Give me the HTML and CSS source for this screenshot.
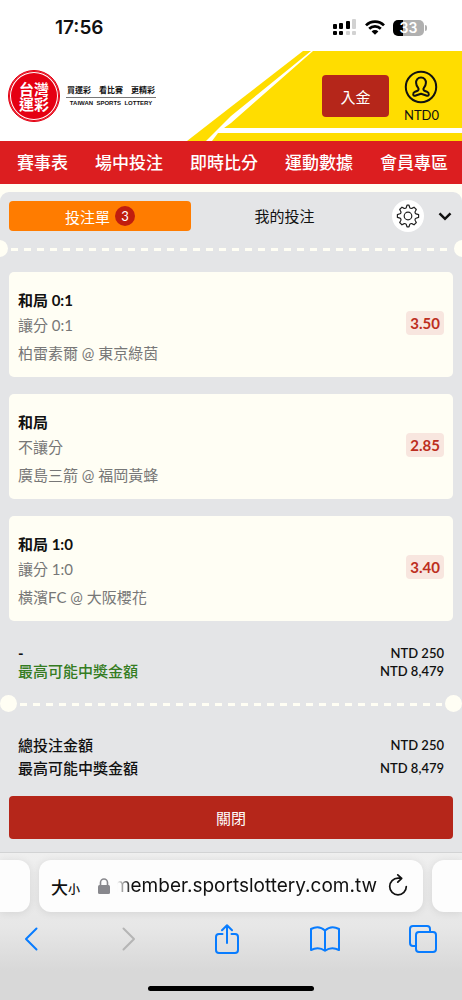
FILE: index.html
```html
<!DOCTYPE html>
<html lang="zh-Hant">
<head>
<meta charset="utf-8">
<meta name="viewport" content="width=device-width, initial-scale=1">
<title>台灣運彩</title>
<link rel="stylesheet" href="styles.css">
</head>
<body>
<div class="status">
  <time class="clock">17:56</time>
  <div class="status-icons">
    <svg width="24" height="17" viewBox="0 0 24 17" aria-hidden="true">
      <g fill="#000"><rect x="0" y="5" width="4" height="5" rx="1"/><rect x="6" y="4" width="4" height="6" rx="1"/><rect x="13" y="2" width="4" height="8" rx="1"/><rect x="0" y="12" width="4" height="4" rx="1"/><rect x="6" y="12" width="4" height="4" rx="1"/></g>
      <g fill="#d2d2d2"><rect x="19" y="0" width="4" height="10" rx="1"/><rect x="13" y="12" width="4" height="4" rx="1"/><rect x="19" y="12" width="4" height="4" rx="1"/></g>
    </svg>
    <svg width="20" height="15" viewBox="0 0 20 15" aria-hidden="true">
      <g fill="none" stroke="#000" stroke-width="2.7"><path d="M1 5.4a12.7 12.7 0 0 1 18 0"/><path d="M4.2 8.800a8.200 8.200 0 0 1 11.600 0"/></g>
      <path d="M10 14.800 6.600 11.400a4.800 4.800 0 0 1 6.800 0z"/>
    </svg>
    <span class="battery">33</span>
  </div>
</div>

<header class="header">
  <svg class="header-art" viewBox="0 0 276 90" preserveAspectRatio="xMaxYMid slice" aria-hidden="true">
    <path fill="#ffdd00" d="M117 0H276V90H1L46 55Z"/>
    <path fill="#fff" d="M125 0H127L45 72 38 77H276V82H32L26 90H20L45 65Z"/>
  </svg>
  <a class="logo" href="#">
    <span class="seal"><span>台灣<br>運彩</span></span>
    <span class="slogan">
      <span class="slogan-zh"><span>買運彩</span><span>看比賽</span><span>更精彩</span></span>
      <span class="slogan-en">TAIWAN&nbsp; SPORTS&nbsp; LOTTERY</span>
    </span>
  </a>
  <div class="account">
    <button class="deposit" type="button">入金</button>
    <a class="profile" href="#">
      <svg width="34" height="34" viewBox="0 0 34 34" fill="none" stroke="#111" stroke-width="2" aria-hidden="true">
        <circle cx="17" cy="17" r="15.200"/>
        <path stroke-linejoin="round" d="M17 7.500c-3.200 0-5.100 2.300-4.900 5.400.1 2.500 1 3.900 2.100 5.100.7.900.4 2.300-.6 2.700l-2.500 1c-1.300.6-2 1.600-1.900 2.900.2 1.300 1.400 1.300 2.600.9l5.200-1.800 5.200 1.800c1.200.4 2.400.4 2.600-.9.1-1.300-.6-2.300-1.900-2.900l-2.500-1c-1-.4-1.300-1.800-.6-2.700 1.100-1.200 2-2.600 2.100-5.100.2-3.100-1.700-5.400-4.900-5.400Z"/>
      </svg>
      <span>NTD0</span>
    </a>
  </div>
</header>

<nav class="nav">
  <a href="#">賽事表</a><a href="#">場中投注</a><a href="#">即時比分</a><a href="#">運動數據</a><a href="#">會員專區</a>
</nav>

<main class="page">
  <section class="slip">
    <div class="tabs">
      <button class="tab tab-active" type="button">投注單<span class="count">3</span></button>
      <button class="tab" type="button">我的投注</button>
      <button class="gear" type="button" aria-label="設定">
        <svg width="24" height="24" viewBox="0 0 24 24" fill="none" stroke="#222" stroke-width="1.200" stroke-linejoin="round" aria-hidden="true">
          <circle cx="12" cy="12" r="3.800"/>
          <path d="M10.300 3.500 11 1.200h2l.7 2.300c.2.600 1.500 1.200 2.100.9l2.200-1.200 2.300 2.300-1.200 2.200c-.3.700.2 1.900.9 2.100l2.600.8v2.800l-2.600.8c-.7.200-1.200 1.400-.9 2.100l1.200 2.200-2.300 2.300-2.200-1.200c-.6-.3-1.900.3-2.100.9l-.7 2.300h-2l-.7-2.300c-.2-.6-1.500-1.200-2.100-.9L6 20.800l-2.300-2.300 1.200-2.200c.3-.7-.2-1.900-.9-2.100l-2.600-.8v-2.800L4 9.800c.7-.2 1.200-1.400.9-2.100L3.700 5.500 6 3.200l2.200 1.200c.6.300 1.900-.3 2.100-.9Z"/>
        </svg>
      </button>
      <button class="collapse" type="button" aria-label="收合">
        <svg width="14" height="9" viewBox="0 0 14 9" fill="none" stroke="#111" stroke-width="2.500" aria-hidden="true"><path d="M1.500 1.300 7 6.800l5.500-5.500"/></svg>
      </button>
    </div>
    <div class="tear tear-edge"></div>
    <ul class="bets">
      <li class="bet"><div class="bet-info"><strong>和局 0:1</strong><span>讓分 0:1</span><span class="match">柏雷素爾 @ 東京綠茵</span></div><span class="odds">3.50</span></li>
      <li class="bet"><div class="bet-info"><strong>和局</strong><span>不讓分</span><span class="match">廣島三箭 @ 福岡黃蜂</span></div><span class="odds">2.85</span></li>
      <li class="bet"><div class="bet-info"><strong>和局 1:0</strong><span>讓分 1:0</span><span class="match">橫濱FC @ 大阪櫻花</span></div><span class="odds">3.40</span></li>
    </ul>
    <dl class="sums">
      <div class="sum sum-stake"><dt>-</dt><dd>NTD 250</dd></div>
      <div class="sum sum-win"><dt>最高可能中獎金額</dt><dd>NTD 8,479</dd></div>
    </dl>
    <div class="tear"></div>
    <dl class="sums totals">
      <div class="sum"><dt>總投注金額</dt><dd>NTD 250</dd></div>
      <div class="sum"><dt>最高可能中獎金額</dt><dd>NTD 8,479</dd></div>
    </dl>
    <button class="close" type="button">關閉</button>
  </section>
</main>

<footer class="browser">
  <div class="addresses">
    <div class="neighbour neighbour-left"></div>
    <div class="address">
      <button class="text-size" type="button"><span>大</span><small>小</small></button>
      <svg class="lock" width="12" height="17" viewBox="0 0 12 17" aria-hidden="true"><rect y="7" width="12" height="9" rx="1.500" fill="#88888d"/><path d="M2.500 8V4.500a3.500 3.500 0 0 1 7 0V8" fill="none" stroke="#88888d" stroke-width="1.600"/></svg>
      <button class="url" type="button"><span>member.sportslottery.com.tw</span></button>
      <button class="icon" type="button" aria-label="重新載入">
        <svg width="20" height="24" viewBox="0 0 20 24" fill="none" stroke="#111" stroke-width="1.700" stroke-linecap="round" stroke-linejoin="round" aria-hidden="true"><path d="M18.300 12.500a8.300 8.300 0 1 1-8.300-8.300h3.500M9.800.9l3.900 3.400-3.900 3.900"/></svg>
      </button>
    </div>
    <div class="neighbour neighbour-right"></div>
  </div>
  <div class="toolbar">
    <button class="icon" type="button" aria-label="上一頁"><svg width="14" height="24" viewBox="0 0 14 24"><path d="M12.500 1.500 2 12l10.500 10.500"/></svg></button>
    <button class="icon icon-off" type="button" aria-label="下一頁" disabled><svg width="14" height="24" viewBox="0 0 14 24"><path d="M1.500 1.500 12 12 1.500 22.500"/></svg></button>
    <button class="icon" type="button" aria-label="分享"><svg width="24" height="30" viewBox="0 0 24 30"><path d="M7.500 10H4a3 3 0 0 0-3 3v13a3 3 0 0 0 3 3h16a3 3 0 0 0 3-3V13a3 3 0 0 0-3-3h-3.500M12 19V1.500M7 6.200l5-5 5 5"/></svg></button>
    <button class="icon" type="button" aria-label="書籤"><svg width="30" height="26" viewBox="0 0 30 26"><path d="M15 4.500C11 .8 5.500.6 1 3v21c4.500-2.400 10-2.200 14 .8 4-3 9.500-3.200 14-.8V3C24.500.6 19 .8 15 4.500v20"/></svg></button>
    <button class="icon" type="button" aria-label="分頁"><svg width="28" height="28" viewBox="0 0 28 28"><path d="M7 21H4a3 3 0 0 1-3-3V4a3 3 0 0 1 3-3h14a3 3 0 0 1 3 3v3"/><rect x="7" y="7" width="20" height="20" rx="3"/></svg></button>
  </div>
  <div class="home-bar"></div>
</footer>
</body>
</html>
```
FILE: styles.css
```css
* { box-sizing: border-box; }
body {
  margin: 0;
  min-height: 100vh;
  display: flex;
  flex-direction: column;
  background: #fffef4;
  color: #111;
  font-family: Lato, "Noto Sans CJK TC", sans-serif;
  font-size: 15px;
}
button {
  padding: 0;
  border: 0;
  background: none;
  color: inherit;
  font: inherit;
}
a { color: inherit; text-decoration: none; }
svg { display: block; flex: none; }

.status {
  display: flex;
  justify-content: space-between;
  align-items: center;
  height: 51px;
  padding: 4px 38px 0 55px;
  background: #fff;
}
.clock { font: 600 19px/24px Inter, sans-serif; }
.status-icons { display: flex; align-items: center; gap: 8px; }
.battery {
  position: relative;
  width: 31px;
  border-radius: 5px;
  background: linear-gradient(90deg, #000 33%, #b0b0b0 33%);
  color: #fff;
  font: 600 14px/16px Inter, sans-serif;
  text-align: center;
}
.battery::after {
  content: "";
  position: absolute;
  left: 32px;
  top: 5px;
  width: 2px;
  height: 6px;
  border-radius: 0 2px 2px 0;
  background: #b0b0b0;
}

.header {
  position: relative;
  display: flex;
  justify-content: space-between;
  height: 90px;
  padding: 0 23px 0 8px;
  background: #fff;
}
.header-art { position: absolute; right: 0; top: 0; width: 276px; height: 90px; }
.logo, .account { position: relative; display: flex; align-items: center; }
.logo { gap: 6px; }
.seal {
  display: grid;
  place-items: center;
  width: 52px;
  height: 52px;
  border: 1px solid #e50012;
  border-radius: 50%;
  background: #e50012;
  box-shadow: inset 0 0 0 1px #e50012, inset 0 0 0 2px #fff;
  color: #fff;
  font: 700 15px/15px "Noto Sans CJK TC", sans-serif;
}
.slogan { display: flex; flex-direction: column; align-items: center; padding-bottom: 2px; }
.slogan-zh {
  display: flex;
  gap: 8px;
  padding: 0 1px;
  border-bottom: 1px solid #777;
  font: 700 8px/15px "Noto Sans CJK TC", sans-serif;
}
.slogan-en { font: 700 6px/11px "Liberation Sans", sans-serif; }
.account { gap: 15px; }
.deposit {
  width: 67px;
  height: 42px;
  border-radius: 4px;
  background: #b5261a;
  color: #fff;
}
.profile {
  display: flex;
  flex-direction: column;
  align-items: center;
  padding-top: 3px;
  font-size: 13px;
  line-height: 22px;
}

.nav {
  display: flex;
  justify-content: space-between;
  padding: 0 14px 0 17px;
  background: #dc1e20;
  color: #fff;
  font-size: 17px;
  font-weight: 500;
  line-height: 43px;
}

.page { flex: 1; display: flex; flex-direction: column; padding-top: 8px; }
.slip {
  flex: 1;
  overflow: hidden;
  padding: 4px 9px 12px;
  border-radius: 9px 9px 0 0;
  background: #e4e5e7;
}
.tabs { display: flex; align-items: center; height: 40px; }
.tab { flex: 1; height: 30px; padding-bottom: 2px; }
.tab-active {
  display: flex;
  flex: 0 0 41%;
  align-items: center;
  justify-content: center;
  gap: 5px;
  padding: 0;
  border-radius: 4px;
  background: #ff7c00;
  color: #fff;
}
.count {
  width: 20px;
  border-radius: 50%;
  background: #c01d0e;
  font-size: 13px;
  line-height: 20px;
}
.gear {
  display: grid;
  place-items: center;
  width: 32px;
  height: 32px;
  margin-left: 14px;
  border-radius: 50%;
  background: #fff;
}
.collapse { display: grid; place-items: center; width: 28px; height: 32px; margin: 0 -6px 0 7px; }

.tear {
  display: flex;
  justify-content: space-between;
  height: 17px;
  margin: 0 -9px;
  background: repeating-linear-gradient(90deg, #fffef4 0 7px, transparent 7px 13px) 20px 8px / calc(100% - 40px) 3px no-repeat;
}
.tear::before, .tear::after {
  content: "";
  width: 17px;
  border-radius: 50%;
  background: #fffef4;
}
.tear-edge {
  margin: 4px -18px 0;
}

.bets {
  display: grid;
  gap: 17px;
  margin: 0;
  padding: 15px 0 0;
  list-style: none;
}
.bet {
  display: flex;
  align-items: center;
  justify-content: space-between;
  padding: 16px 9px 9px;
  border-radius: 5px;
  background: #fffef4;
}
.bet-info { display: flex; flex-direction: column; color: #777; line-height: 25px; }
.bet-info strong { color: #111; font-weight: 700; }
.match { line-height: 30px; }
.odds {
  padding: 0 4px;
  margin-bottom: 10px;
  border-radius: 4px;
  background: #f8e6df;
  color: #bd2e20;
  font-weight: 700;
  line-height: 24px;
}

.sums { margin: 0; padding: 23px 9px 15px; line-height: 18px; }
.sum { display: flex; justify-content: space-between; align-items: center; }
.sum dt { font-weight: 500; }
.sum dd { margin: 0; font-size: 13px; font-weight: 600; }
.sum-stake dt { font-weight: 700; }
.sum-win dt { color: #347c22; }
.totals { padding: 22px 9px 16px; line-height: 23px; }
.close {
  display: block;
  width: 100%;
  height: 43px;
  border-radius: 4px;
  background: #b5261a;
  color: #fff;
}

.browser {
  overflow: hidden;
  border-top: 1px solid #d2d3d4;
  background: linear-gradient(#efefef, #e7e7e7 50%, #d8d8d8 80%);
}
.addresses { display: flex; gap: 9px; padding-top: 7px; }
.address, .neighbour {
  height: 52px;
  background: #fdfdfd;
  box-shadow: 0 1px 8px #00000018;
}
.neighbour { flex: 0 0 30px; }
.neighbour-left { border-radius: 0 12px 12px 0; }
.neighbour-right { border-radius: 12px 0 0 12px; }
.address {
  display: flex;
  flex: 1;
  min-width: 0;
  align-items: center;
  padding: 0 15px 0 12px;
  border-radius: 12px;
}
.text-size { font-weight: 500; font-size: 17px; }
.text-size small { font-size: 12px; }
.lock { margin: 0 7px 0 18px; }
.url {
  display: flex;
  flex: 1;
  min-width: 0;
  overflow: hidden;
  justify-content: flex-end;
  margin-right: 11px;
  font: 400 19px/28px Inter, sans-serif;
  -webkit-mask-image: linear-gradient(90deg, transparent, #000 14px);
  mask-image: linear-gradient(90deg, transparent, #000 14px);
}
.toolbar {
  display: flex;
  justify-content: space-between;
  align-items: center;
  height: 54px;
  padding: 0 24px 0 16px;
}
.icon { display: grid; place-items: center; }
.toolbar .icon { width: 30px; }
.toolbar svg {
  fill: none;
  stroke: #087cff;
  stroke-width: 2;
  stroke-linecap: round;
  stroke-linejoin: round;
}
.toolbar .icon-off svg { stroke: #b5b5b5; }
.home-bar {
  width: 36%;
  height: 5px;
  margin: 20px auto 9px;
  border-radius: 3px;
  background: #000;
}
```
